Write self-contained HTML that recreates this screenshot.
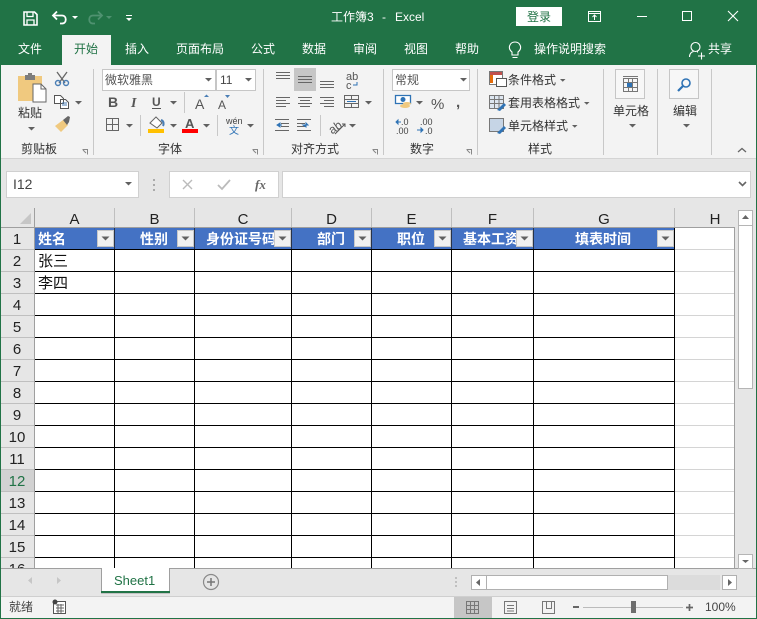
<!DOCTYPE html>
<html lang="zh"><head><meta charset="utf-8"><title>Excel</title>
<style>
html,body{margin:0;padding:0;background:#e6e6e6;overflow:hidden}
svg{display:block;position:absolute;left:0;top:0}
text{font-family:"Liberation Sans","Noto Sans CJK SC",sans-serif;font-size:12px;fill:#333}
.r text{font-size:15px;fill:#222;text-anchor:middle}
.h text{font-size:14px;font-weight:bold;fill:#fff}
.wt text{fill:#fff}
</style></head><body>
<svg width="757" height="619" viewBox="0 0 757 619">
<defs>
<clipPath id="c1"><rect x="195" y="228" width="80" height="21"/></clipPath>
<clipPath id="c2"><rect x="452" y="228" width="65" height="21"/></clipPath>
<clipPath id="gr"><rect x="0" y="208" width="736" height="360"/></clipPath>
<g id="fb"><rect x=".5" y=".5" width="16" height="16" fill="#f0f0f0" stroke="#c8c8c8"/><path d="M4.500 6.500h8l-4 4z" fill="#606060"/></g>
<path id="dd" d="M0 0h7l-3.500 3.500z" fill="#606060"/>
</defs>
<!-- base -->
<rect width="757" height="619" fill="#217346"/>
<rect x="1" y="65" width="755" height="553" fill="#e6e6e6"/>
<rect x="1" y="65" width="755" height="93" fill="#f3f3f3"/>
<rect x="1" y="158" width="755" height="1" fill="#d4d4d4"/>
<!-- title bar icons -->
<g fill="none" stroke="#fff" stroke-width="1.600">
<path d="M24 12h10.500l2.500 2.500V25H24z"/><path d="M27 12v4.500h6V12M27 25v-5h7v5" stroke-width="1.300"/>
<path d="M54 15.500h8c5 0 5 8 0 8h-2" stroke-width="1.800"/><path d="M57 11.500l-4 4 4 4" stroke-width="1.800"/>
</g>
<path d="M72 16h6l-3 3z" fill="#fff"/>
<g fill="none" stroke="#4f9270" stroke-width="1.800"><path d="M101 15.500h-8c-5 0-5 8 0 8h2"/><path d="M98 11.500l4 4-4 4"/></g>
<path d="M106 16h6l-3 3z" fill="#4f9270"/>
<path d="M126 15h6v1h-6zM126 18h6l-3 3z" fill="#fff"/>
<g class="wt"><text x="331" y="21">工作簿3</text><text x="382" y="21">-</text><text x="395" y="21">Excel</text></g>
<rect x="516" y="7" width="46" height="19" fill="#fff"/>
<text x="527" y="21" style="fill:#217346">登录</text>
<g fill="none" stroke="#fff"><path d="M588.500 11.500h12v10h-12zM588.500 13.500h12M594.500 20v-5M592.500 17l2-2 2 2"/>
<path d="M637 16.500h10"/><rect x="682.500" y="11.500" width="9" height="9"/><path d="M728 11l10 10M738 11l-10 10" stroke-width="1.100"/></g>
<!-- tabs -->
<rect x="62" y="35" width="49" height="30" fill="#f3f3f3"/>
<g class="wt">
<text x="18" y="53">文件</text>
<text x="125" y="53">插入</text>
<text x="176" y="53">页面布局</text>
<text x="251" y="53">公式</text>
<text x="302" y="53">数据</text>
<text x="353" y="53">审阅</text>
<text x="404" y="53">视图</text>
<text x="455" y="53">帮助</text>
<text x="534" y="53">操作说明搜索</text>
<text x="708" y="53">共享</text>
</g>
<text x="74" y="53" style="fill:#217346">开始</text>
<g fill="none" stroke="#fff" stroke-width="1.100"><path d="M512 55v-3c-5-4-2-10 3-10s8 6 3 10v3zM512.500 57.500h5"/>
<circle cx="695.500" cy="47" r="4.500"/><path d="M689.500 57c0-4 2-5 4-5.500M697 52h1M698 56h7M701.500 52.500v7"/></g>
<!-- ribbon separators -->
<g fill="#c8c8c8"><rect x="93" y="69" width="1" height="86"/><rect x="263" y="69" width="1" height="86"/><rect x="383" y="69" width="1" height="86"/><rect x="477" y="69" width="1" height="86"/><rect x="603" y="69" width="1" height="86"/><rect x="657" y="69" width="1" height="86"/><rect x="711" y="69" width="1" height="86"/>
<rect x="184" y="92" width="1" height="21"/><rect x="140" y="115" width="1" height="21"/><rect x="217" y="115" width="1" height="21"/><rect x="320" y="115" width="1" height="21"/></g>
<!-- clipboard -->
<path d="M18 76h24v25H18z" fill="#f0c97f"/><rect x="25" y="75" width="10" height="5" fill="#7d7d7d"/><rect x="28" y="73" width="4" height="3" fill="#7d7d7d"/>
<path d="M33 84h8l5 5v13H33z" fill="#fff" stroke="#666"/><path d="M41 84v5h5" fill="none" stroke="#666"/>
<text x="18" y="117">粘贴</text><use href="#dd" x="28" y="127"/>
<g fill="none"><path d="M57 72l8 11M67 72l-8 11" stroke="#666" stroke-width="1.300"/><circle cx="58" cy="83" r="2.500" stroke="#4a7eb5" stroke-width="1.400"/><circle cx="66" cy="83" r="2.500" stroke="#4a7eb5" stroke-width="1.400"/>
<path d="M54.500 95.500h6l3 3v5h-9zM60.500 99.500h5l3 3v6h-8z" stroke="#555" fill="#fff"/><path d="M62 103h5M62 105h5" stroke="#4a7eb5"/></g>
<use href="#dd" x="75" y="101"/>
<path d="M55 126l8-6 5 5-7 7z" fill="#f0c97f"/><path d="M63 120l5-4 2 1-1 5-2 3z" fill="#666"/>
<text x="21" y="153">剪贴板</text>
<path d="M82.500 149.500h5v5M86 153l-3-3" fill="none" stroke="#888"/>
<!-- font -->
<rect x="102.500" y="69.500" width="113" height="21" fill="#fff" stroke="#c6c6c6"/><rect x="216.500" y="69.500" width="39" height="21" fill="#fff" stroke="#c6c6c6"/>
<text x="105" y="84" style="fill:#555">微软雅黑</text><text x="220" y="84" style="fill:#444">11</text>
<use href="#dd" x="205" y="78"/><use href="#dd" x="245" y="78"/>
<text x="108" y="107" style="font-weight:bold;font-size:14px;fill:#555">B</text>
<text x="131" y="107" style="font-style:italic;font-family:'Liberation Serif',serif;font-weight:bold;font-size:14px;fill:#555">I</text>
<text x="152" y="106" style="font-weight:bold;fill:#555">U</text><rect x="152" y="108" width="9" height="1" fill="#555"/>
<use href="#dd" x="170" y="101"/>
<text x="195" y="109" style="font-size:14px;fill:#555">A</text><path d="M204 97h5l-2.500-2.500z" fill="#4a7eb5"/>
<text x="218" y="109" style="fill:#555">A</text><path d="M225 95h5l-2.500 3z" fill="#4a7eb5"/>
<path d="M106.500 118.500h12v12h-12zM112.500 118v13M106 124.500h13" fill="none" stroke="#666"/>
<use href="#dd" x="126" y="124"/>
<path d="M150 123l6-6 6 6-5 5z" fill="#fff" stroke="#666"/><path d="M161 120c3 1 3 4 2 6" stroke="#4a7eb5" stroke-width="2" fill="none"/><rect x="148" y="129" width="16" height="4" fill="#ffc000"/>
<use href="#dd" x="170" y="124"/>
<text x="185" y="128" style="font-size:13px;font-weight:bold;fill:#555">A</text><rect x="182" y="129" width="16" height="4" fill="#f00"/>
<use href="#dd" x="203" y="124"/>
<text x="226" y="124" style="font-size:9px;fill:#444">wén</text><text x="229" y="134" style="font-size:10px;fill:#2f73b5">文</text>
<use href="#dd" x="247" y="124"/>
<text x="158" y="153">字体</text>
<path d="M252.500 149.500h5v5M256 153l-3-3" fill="none" stroke="#888"/>
<!-- alignment -->
<rect x="294" y="68" width="22" height="23" fill="#c6c6c6"/>
<g stroke="#666" fill="none"><path d="M276 72.500h14M276 75.500h14M276 78.500h14M298 76.500h14M298 79.500h14M298 82.500h14M320 81.500h14M320 84.500h14M320 87.500h14"/>
<path d="M276 97.500h14M276 100.500h10M276 103.500h14M276 106.500h10M298 97.500h14M300 100.500h10M298 103.500h14M300 106.500h10M320 97.500h14M324 100.500h10M320 103.500h14M324 106.500h10"/>
<path d="M344.500 95.500h14v12h-14zM344.500 99.500h14M344.500 103.500h14M351.500 95.500v4M351.500 103.500v4"/>
<path d="M275 119.500h14M281 123.500h8M281 126.500h8M275 130.500h14M297 119.500h14M297 123.500h8M297 126.500h8M297 130.500h14"/></g>
<path d="M347 101.500h9" stroke="#2f73b5"/><path d="M277 125h5M277 125l3-2v4zM303 125h5l-2-2v4z" stroke="#2f73b5" fill="#2f73b5"/>
<text x="346" y="80" style="font-size:11px;fill:#555">ab</text><text x="346" y="89" style="font-size:11px;fill:#555">c</text><path d="M357 82v3h-4" stroke="#2f73b5" fill="none"/>
<use href="#dd" x="365" y="101"/>
<text x="329" y="131" transform="rotate(-35 336 128)" style="font-size:12px;fill:#555">ab</text><path d="M335 134l10-10M342 124h3v3" stroke="#555" fill="none"/>
<use href="#dd" x="349" y="124"/>
<text x="291" y="153">对齐方式</text>
<path d="M372.500 149.500h5v5M376 153l-3-3" fill="none" stroke="#888"/>
<!-- number -->
<rect x="392.500" y="69.500" width="77" height="21" fill="#fff" stroke="#c6c6c6"/>
<text x="395" y="84" style="fill:#555">常规</text><use href="#dd" x="460" y="78"/>
<path d="M395.500 95.500h15v8h-15z" fill="#fff" stroke="#2f73b5" stroke-width="1.300"/><circle cx="403" cy="99.500" r="2.500" fill="#2f73b5"/><ellipse cx="405" cy="106" rx="5" ry="2" fill="#f0c97f"/><ellipse cx="407" cy="103.500" rx="4" ry="1.500" fill="#f0c97f"/>
<use href="#dd" x="416" y="101"/>
<text x="431" y="109" style="font-size:15px;fill:#555">%</text><text x="456" y="107" style="font-size:15px;font-weight:bold;fill:#555">,</text>
<text x="401" y="125" style="font-size:9px;fill:#444">.0</text><text x="396" y="134" style="font-size:9px;fill:#444">.00</text><path d="M396 122h5M396 122l2-2v4z" stroke="#2f73b5" fill="#2f73b5"/>
<text x="420" y="125" style="font-size:9px;fill:#444">.00</text><text x="425" y="134" style="font-size:9px;fill:#444">.0</text><path d="M417 130h6M423 130l-2-2v4z" stroke="#2f73b5" fill="#2f73b5"/>
<text x="410" y="153">数字</text>
<path d="M466.500 149.500h5v5M470 153l-3-3" fill="none" stroke="#888"/>
<!-- styles -->
<path d="M489.500 71.500h13v13h-13z" fill="#fff" stroke="#777"/><rect x="490" y="72" width="12" height="3" fill="#c0504d"/><rect x="490" y="75" width="3" height="8" fill="#e46c0a"/>
<rect x="496.500" y="78.500" width="10" height="8" fill="#fff" stroke="#555"/>
<path d="M489.500 95.500h14v13h-14zM489.500 99.500h14M494.500 95.500v13M499 95.500v13M489.500 103.500h14" fill="#dde6f0" stroke="#777"/><path d="M497 110l7-7 2 2-6 6z" fill="#2f73b5"/>
<path d="M489.500 118.500h14v13h-14z" fill="#c6d5e6" stroke="#777"/><path d="M497 133l7-7 2 2-6 6z" fill="#2f73b5"/>
<text x="508" y="84">条件格式</text><path d="M560 79h5.500l-2.750 2.750z" fill="#606060"/>
<text x="508" y="107">套用表格格式</text><path d="M584 102h5.500l-2.750 2.750z" fill="#606060"/>
<text x="508" y="130">单元格样式</text><path d="M572 125h5.500l-2.750 2.750z" fill="#606060"/>
<text x="528" y="153">样式</text>
<!-- cells / edit -->
<rect x="615.500" y="69.500" width="29" height="29" fill="#f7f7f7" stroke="#c6c6c6"/>
<path d="M623.500 78.500h14v13h-14zM623.500 82.500h14M623.500 87.500h14M628.500 78.500v13M632.500 78.500v13M623 76.500h15" fill="none" stroke="#777"/><rect x="627" y="83" width="5" height="4" fill="#2f73b5"/>
<text x="613" y="115">单元格</text><use href="#dd" x="629" y="124"/>
<rect x="669.500" y="69.500" width="29" height="29" fill="#f7f7f7" stroke="#c6c6c6"/>
<circle cx="686" cy="83" r="4" fill="none" stroke="#2f73b5" stroke-width="1.600"/><path d="M683 86l-5 5" stroke="#2f73b5" stroke-width="2.200"/>
<text x="673" y="115">编辑</text><use href="#dd" x="683" y="124"/>
<path d="M738 152l4-3.500 4 3.500" fill="none" stroke="#666" stroke-width="1.300"/>
<!-- formula bar -->
<rect x="6.500" y="171.500" width="132" height="26" fill="#fff" stroke="#d0d0d0"/>
<text x="13" y="189" style="font-size:14px;fill:#444">I12</text><use href="#dd" x="125" y="182"/>
<path d="M153 179h2v2h-2zM153 184h2v2h-2zM153 189h2v2h-2z" fill="#aaa"/>
<rect x="169.500" y="171.500" width="109" height="26" fill="#fff" stroke="#d0d0d0"/>
<path d="M183 180l9 9M192 180l-9 9" stroke="#bbb" stroke-width="1.400"/><path d="M218 185l4 4 8-9" fill="none" stroke="#bbb" stroke-width="1.800"/>
<text x="255" y="189" style="font-family:'Liberation Serif',serif;font-style:italic;font-weight:bold;font-size:13px;fill:#666">fx</text>
<rect x="282.500" y="171.500" width="468" height="26" fill="#fff" stroke="#d0d0d0"/>
<path d="M739 182l3.500 3.500L746 182" fill="none" stroke="#666" stroke-width="1.600"/>
<!-- grid -->
<g clip-path="url(#gr)">
<rect x="1" y="208" width="734" height="20" fill="#e6e6e6"/>
<rect x="1" y="228" width="33" height="340" fill="#e6e6e6"/>
<rect x="35" y="228" width="700" height="340" fill="#fff"/>
<rect x="1" y="470" width="33" height="22" fill="#d2d2d2"/>
<path d="M20 224h11v-11z" fill="#c6c6c6"/>
<g stroke="#bfbfbf" fill="none">
<path d="M114.500 208v20M194.500 208v20M291.500 208v20M371.500 208v20M451.500 208v20M533.500 208v20M674.500 208v20M34.500 208v20"/>
<path d="M1 249.500h33M1 271.500h33M1 293.500h33M1 315.500h33M1 337.500h33M1 359.500h33M1 381.500h33M1 403.500h33M1 425.500h33M1 447.500h33M1 469.500h33M1 491.500h33M1 513.500h33M1 535.500h33M1 557.500h33"/>
<path d="M675 249.500h60M675 271.500h60M675 293.500h60M675 315.500h60M675 337.500h60M675 359.500h60M675 381.500h60M675 403.500h60M675 425.500h60M675 447.500h60M675 469.500h60M675 491.500h60M675 513.500h60M675 535.500h60M675 557.500h60" stroke="#d4d4d4"/>
</g>
<rect x="1" y="227" width="734" height="1" fill="#9f9f9f"/><rect x="34" y="208" width="1" height="360" fill="#9f9f9f"/><rect x="734" y="228" width="1" height="340" fill="#9f9f9f"/>
<rect x="35" y="228" width="639" height="21" fill="#4472c4"/>
<path d="M35 249.500h640M35 271.500h640M35 293.500h640M35 315.500h640M35 337.500h640M35 359.500h640M35 381.500h640M35 403.500h640M35 425.500h640M35 447.500h640M35 469.500h640M35 491.500h640M35 513.500h640M35 535.500h640M35 557.500h640" stroke="#000"/>
<path d="M114.500 249v319M194.500 249v319M291.500 249v319M371.500 249v319M451.500 249v319M533.500 249v319M674.500 228v340" stroke="#000"/>
<path d="M114.500 228v21M194.500 228v21M291.500 228v21M371.500 228v21M451.500 228v21M533.500 228v21" stroke="#1f1f1f" stroke-opacity=".75"/>
<g class="r">
<text x="74.500" y="224">A</text><text x="154.500" y="224">B</text><text x="243" y="224">C</text><text x="331.500" y="224">D</text><text x="411.500" y="224">E</text><text x="492.500" y="224">F</text><text x="604" y="224">G</text><text x="715" y="224">H</text>
<text x="17" y="244">1</text><text x="17" y="266">2</text><text x="17" y="288">3</text><text x="17" y="310">4</text><text x="17" y="332">5</text><text x="17" y="354">6</text><text x="17" y="376">7</text><text x="17" y="398">8</text><text x="17" y="420">9</text><text x="17" y="442">10</text><text x="17" y="464">11</text><text x="17" y="486" style="fill:#217346">12</text><text x="17" y="508">13</text><text x="17" y="530">14</text><text x="17" y="552">15</text><text x="17" y="574">16</text>
</g>
<g class="h">
<text x="38" y="244">姓名</text><text x="140" y="244">性别</text><text x="206" y="244" clip-path="url(#c1)">身份证号码</text><text x="317" y="244">部门</text><text x="397" y="244">职位</text><text x="463" y="244" clip-path="url(#c2)">基本工资</text><text x="575" y="244">填表时间</text>
</g>
<use href="#fb" x="97" y="230"/><use href="#fb" x="177" y="230"/><use href="#fb" x="274" y="230"/><use href="#fb" x="354" y="230"/><use href="#fb" x="434" y="230"/><use href="#fb" x="516" y="230"/><use href="#fb" x="657" y="230"/>
<text x="38" y="266" style="font-size:15px;fill:#111">张三</text>
<text x="38" y="288" style="font-size:15px;fill:#111">李四</text>
</g>
<rect x="1" y="568" width="755" height="1" fill="#9f9f9f"/>
<!-- v scroll -->
<rect x="738" y="210" width="14" height="359" fill="#e6e6e6"/>
<rect x="738.500" y="210.500" width="14" height="15" fill="#fff" stroke="#b5b5b5"/><path d="M742 219h7l-3.500-4z" fill="#666"/>
<rect x="738.500" y="225.500" width="14" height="163" fill="#fff" stroke="#b5b5b5"/>
<rect x="738.500" y="554.500" width="14" height="14" fill="#fff" stroke="#b5b5b5"/><path d="M742 560h7l-3.500 3z" fill="#666"/>
<!-- sheet bar -->
<path d="M101.500 569v24h68v-24" fill="#fff" stroke="#9f9f9f"/><rect x="101" y="591" width="69" height="2" fill="#217346"/>
<rect x="102" y="568" width="67" height="1" fill="#fff"/>
<text x="114" y="585" style="font-size:13px;fill:#217346">Sheet1</text>
<path d="M32 577v7l-4-3.500zM57 577v7l4-3.500z" fill="#c6c6c6"/>
<circle cx="211" cy="582" r="7.500" fill="none" stroke="#8a8a8a" stroke-width="1.200"/><path d="M207 582h8M211 578v8" stroke="#777" stroke-width="1.500"/>
<path d="M455 577h2v2h-2zM455 581h2v2h-2zM455 585h2v2h-2z" fill="#c0c0c0"/>
<rect x="471.500" y="575.500" width="15" height="14" fill="#fff" stroke="#b0b0b0"/><path d="M480 579v7l-4-3.500z" fill="#666"/>
<rect x="486" y="575" width="234" height="15" fill="#dcdcdc"/>
<rect x="486.500" y="575.500" width="181" height="14" fill="#fff" stroke="#b0b0b0"/>
<rect x="722.500" y="575.500" width="14" height="14" fill="#fff" stroke="#b0b0b0"/><path d="M728 579v7l4-3.500z" fill="#666"/>
<!-- status bar -->
<rect x="1" y="596" width="755" height="1" fill="#cfcfcf"/>
<rect x="1" y="597" width="755" height="21" fill="#f3f3f3"/>
<text x="9" y="611" style="fill:#444">就绪</text>
<path d="M53.500 601.500h12v12h-12z" fill="#fff" stroke="#555"/><circle cx="55" cy="602" r="2.500" fill="#444"/><path d="M56 605h8M56 608h8M56 611h8M58 604v9M61 604v9" stroke="#666"/>
<rect x="454" y="597" width="38" height="21" fill="#c6c6c6"/>
<g fill="none" stroke="#777"><path d="M466.500 601.500h12v12h-12zM466.500 605.500h12M466.500 609.500h12M470.500 601.500v12M474.500 601.500v12"/>
<path d="M504.500 601.500h12v12h-12zM507 605.500h7M507 608.500h7M507 611h7"/>
<path d="M542.500 601.500h12v12h-12zM546.500 601.500v7h5v-7"/></g>
<path d="M573 607h6" stroke="#666" stroke-width="2"/><path d="M583 607.500h100" stroke="#bbb"/><rect x="631" y="601" width="5" height="12" fill="#6e6e6e"/><path d="M686 607.500h7M689.500 604v7" stroke="#666" stroke-width="1.700"/>
<text x="705" y="611" style="fill:#444">100%</text>
<!-- window frame -->
<path d="M.5 65v553.500h756V65" fill="none" stroke="#217346"/>
</svg>
</body></html>
